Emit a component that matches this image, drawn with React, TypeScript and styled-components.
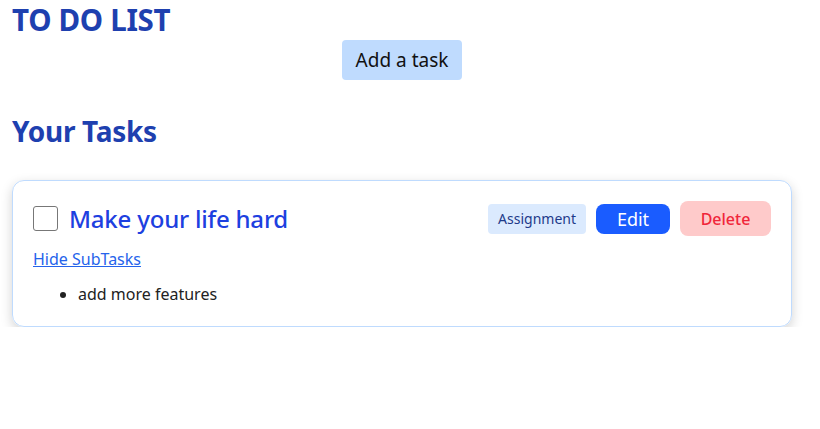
import styled, { createGlobalStyle } from 'styled-components';

const GlobalStyle = createGlobalStyle`
  body {
    margin: 0;
    font-family: "Noto Sans", "Open Sans", sans-serif;
    background: #ffffff;
  }
`;

const Page = styled.div`
  padding: 0 28px 0 12px;
  display: flex;
  flex-direction: column;
`;

const Heading = styled.h1`
  font-size: 29.5px;
  font-weight: 700;
  color: #1e40af;
  margin: 2px 0 0;
  line-height: 36px;
  letter-spacing: -0.3px;
`;

const AddButton = styled.button`
  align-self: center;
  background: #bfdbfe;
  border: none;
  border-radius: 4px;
  padding: 0 14px;
  height: 40px;
  font-family: inherit;
  font-size: 19px;
  color: #111;
  margin-top: 2px;
`;

const SubHeading = styled.h2`
  font-size: 28px;
  font-weight: 700;
  color: #1e40af;
  margin: 33px 0 0;
  line-height: 36px;
  letter-spacing: -0.3px;
`;

const Card = styled.div`
  margin-top: 31px;
  border: 1px solid #bfdbfe;
  border-radius: 12px;
  box-shadow: 0 4px 12px rgba(0, 0, 0, 0.18);
  padding: 20px 20px 20px 20px;
  display: flex;
  flex-direction: column;
`;

const TaskRow = styled.div`
  display: flex;
  align-items: center;
  justify-content: space-between;
`;

const TitleGroup = styled.label`
  display: flex;
  align-items: center;
  gap: 11px;
`;

const Check = styled.input.attrs({ type: 'checkbox' })`
  appearance: none;
  width: 25px;
  height: 25px;
  margin: 0;
  border: 1.5px solid #777;
  border-radius: 3px;
  background: #fff;
`;

const Title = styled.span`
  font-size: 24px;
  color: #1d40e0;
  font-weight: 500;
  letter-spacing: -0.2px;
`;

const Actions = styled.div`
  display: flex;
  align-items: center;
  gap: 10px;
`;

const Tag = styled.span`
  background: #dbeafe;
  color: #1e3a8a;
  font-size: 14px;
  border-radius: 4px;
  height: 30px;
  padding: 0 10px;
  display: flex;
  align-items: center;
`;

const ActionButton = styled.button<{ $variant: 'edit' | 'delete' }>`
  border: none;
  font-family: inherit;
  border-radius: 8px;
  display: flex;
  align-items: center;
  justify-content: center;
  background: ${({ $variant }) => ($variant === 'edit' ? '#1a5cff' : '#fecaca')};
  color: ${({ $variant }) => ($variant === 'edit' ? '#ffffff' : '#f0263a')};
  font-size: ${({ $variant }) => ($variant === 'edit' ? '18px' : '16px')};
  font-weight: ${({ $variant }) => ($variant === 'edit' ? 400 : 500)};
  height: ${({ $variant }) => ($variant === 'edit' ? '30px' : '35px')};
  width: ${({ $variant }) => ($variant === 'edit' ? '74px' : '91px')};
`;

const Toggle = styled.a`
  margin-top: 12px;
  color: #2563eb;
  font-size: 16px;
  text-decoration: underline;
  align-self: flex-start;
  cursor: pointer;
`;

const SubList = styled.ul`
  margin: 12px 0 0;
  padding-left: 45px;
  font-size: 16px;
  color: #222;
  line-height: 24px;

  li {
    padding-left: 0;
  }
`;

export default function App() {
  return (
    <>
      <GlobalStyle />
      <Page>
        <Heading>TO DO LIST</Heading>
        <AddButton>Add a task</AddButton>
        <SubHeading>Your Tasks</SubHeading>
        <Card>
          <TaskRow>
            <TitleGroup>
              <Check />
              <Title>Make your life hard</Title>
            </TitleGroup>
            <Actions>
              <Tag>Assignment</Tag>
              <ActionButton $variant="edit">Edit</ActionButton>
              <ActionButton $variant="delete">Delete</ActionButton>
            </Actions>
          </TaskRow>
          <Toggle>Hide SubTasks</Toggle>
          <SubList>
            <li>add more features</li>
          </SubList>
        </Card>
      </Page>
    </>
  );
}
